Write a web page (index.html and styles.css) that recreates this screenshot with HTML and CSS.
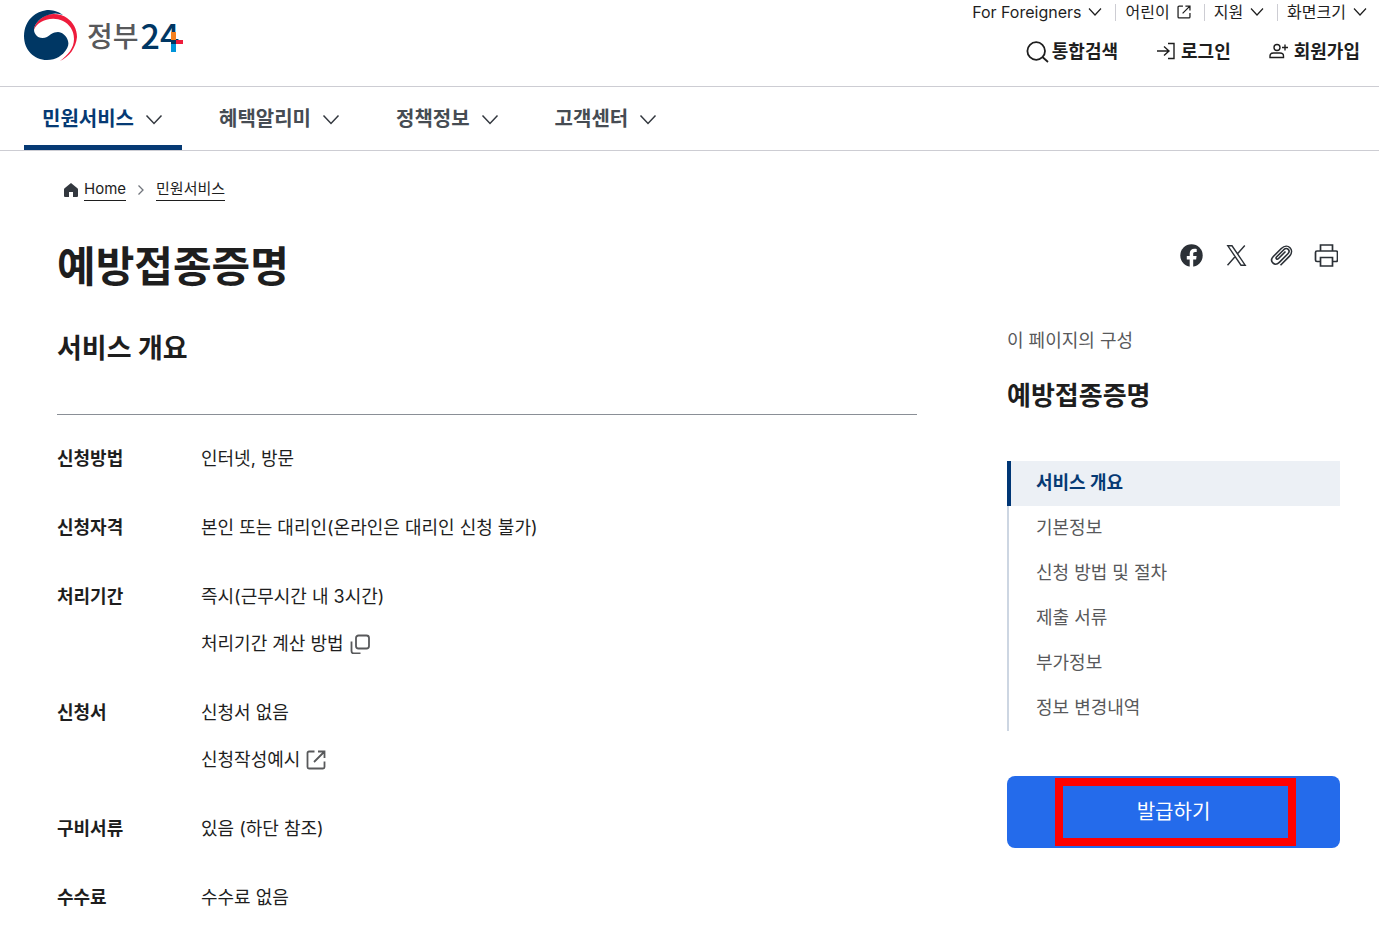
FILE: index.html
```html
<!DOCTYPE html>
<html lang="ko">
<head>
<meta charset="utf-8">
<meta name="viewport" content="width=device-width, initial-scale=1">
<title>예방접종증명 | 정부24</title>
<link rel="stylesheet" href="styles.css">
</head>
<body>
<svg class="sprite" aria-hidden="true">
  <symbol id="chevron" viewBox="0 0 20 20"><path d="M2.500 5.500 10 13.500l7.500-8" fill="none" stroke="currentColor" stroke-width="1.500"/></symbol>
  <symbol id="chevron-small" viewBox="0 0 14 14"><path d="M1 3.500l6 6.500 6-6.500" fill="none" stroke="currentColor" stroke-width="1.200"/></symbol>
  <symbol id="external" viewBox="0 0 20 20"><path d="M8.500 1.500H3a1.500 1.500 0 0 0-1.500 1.500v14A1.500 1.500 0 0 0 3 18.500h14a1.500 1.500 0 0 0 1.500-1.500v-5.500M12 1.500h6.500V8M18 2l-10 10" fill="none" stroke="currentColor" stroke-width="1.800"/></symbol>
</svg>
<header class="header">
  <div class="header-top">
    <a class="logo" href="#" aria-label="정부24">
      <svg class="logo-mark" viewBox="0 0 53 52" aria-hidden="true">
        <path fill="#ee1c3c" d="M10 20C10 14 16 8 23 5C29 3 38 4 43 8C49 12 53 19 53 27C52 38 45 47 36 51C44 45 50 38 50 29C50 20 45 14 39 11C31 7 22 9 17 12C13 14 11 17 10 20Z"/>
        <path fill="#003764" d="M39 5C34 1 28 0 23 0C17 1 12 3 9 6C3 11 0 18 0 26C0 40 10 50 23 50C32 50 39 45 42 40C44 37 45 34 44 31C43 26 38 22 34 22C29 22 26 25 23 27C19 29 14 28 12 25C10 23 10 20 10 19C11 13 17 7 24 5C29 3 34 3 39 5Z"/>
      </svg>
      <span class="logo-name">정부</span>
      <span class="logo-number">24<svg class="logo-cross" viewBox="0 0 14 20" aria-hidden="true"><path fill="#f58220" d="M2 0h5v9H2z"/><path fill="#0095da" d="M2 12h5v8H2z"/><path fill="#ee1c3c" d="M7 8h7v4H7z"/><path fill="#003764" d="M2 8h5v4H2z"/></svg></span>
    </a>
    <div class="header-tools">
      <div class="utility">
        <button type="button">For Foreigners<svg><use href="#chevron-small"/></svg></button>
        <a href="#">어린이<svg><use href="#external"/></svg></a>
        <button type="button">지원<svg><use href="#chevron-small"/></svg></button>
        <button type="button">화면크기<svg><use href="#chevron-small"/></svg></button>
      </div>
      <div class="account">
        <button type="button" class="search"><svg viewBox="0 0 24 24"><path d="M20 11a8.800 8.800 0 1 1-17.600 0 8.800 8.800 0 0 1 17.600 0zM18 17.500l5 4.500" fill="none" stroke="currentColor" stroke-width="1.800"/></svg>통합검색</button>
        <a href="#"><svg viewBox="0 0 20 20"><path d="M1 9h12M8 4.500l5 4.500-5 4.500M12 1.500h6v15h-6" fill="none" stroke="currentColor" stroke-width="1.400"/></svg>로그인</a>
        <a href="#"><svg viewBox="0 0 20 20"><path d="M11 5.500a3 3 0 1 1-6 0 3 3 0 0 1 6 0zM1 15.500V14c0-2 1.500-3 3.500-3H11c2 0 3.500 1 3.500 3v1.500zM16 2.500v6M13 5.500h6" fill="none" stroke="currentColor" stroke-width="1.400"/></svg>회원가입</a>
      </div>
    </div>
  </div>
  <nav class="gnb" aria-label="주 메뉴">
    <button type="button" class="active">민원서비스<svg><use href="#chevron"/></svg></button>
    <button type="button">혜택알리미<svg><use href="#chevron"/></svg></button>
    <button type="button">정책정보<svg><use href="#chevron"/></svg></button>
    <button type="button">고객센터<svg><use href="#chevron"/></svg></button>
  </nav>
</header>
<main class="main">
  <nav class="breadcrumb" aria-label="현재 위치">
    <svg class="home" viewBox="0 0 14 14" aria-hidden="true"><path fill="#33383f" d="M7 0 .6 5.200Q0 5.700 0 6.500V13q0 1 1 1h4V9h4v5h4q1 0 1-1V6.500q0-.8-.6-1.300z"/></svg>
    <a href="#">Home</a>
    <svg class="arrow" viewBox="0 0 8 12" aria-hidden="true"><path d="M1.500 1.500 6 6l-4.500 4.500" fill="none" stroke="#71757c" stroke-width="1.300"/></svg>
    <a href="#">민원서비스</a>
  </nav>
  <div class="title-row">
    <h1>예방접종증명</h1>
    <div class="share">
      <button type="button" aria-label="페이스북"><svg viewBox="0 0 24 24"><circle cx="12.500" cy="11.500" r="11.200" fill="#2b3036"/><path fill="#fff" d="M10.700 23v-7.500H7.800V12h2.900V9.500c0-3.200 1.900-4.800 4.700-4.800.9 0 1.700.1 2.300.2v3h-1.600c-1.400 0-1.900.8-1.900 1.800V12h3.400l-.5 3.500h-2.900V23z"/></svg></button>
      <button type="button" aria-label="X"><svg viewBox="0 0 24 24"><path d="M3.800 1.800h4.200l13.200 19.400H17zM20.800 1.500l-7.500 8.500M11 12.800l-7.500 8.500" fill="none" stroke="#2b3036" stroke-width="1.400"/></svg></button>
      <button type="button" aria-label="링크 복사"><svg viewBox="0 0 24 24"><path d="M16.500 7.500 9.300 14.700c-1.300 1.300-3-.4-1.800-1.700l7.300-7.300c3.200-3 7.200.9 4.100 4.100l-8.600 8.600c-4.700 4.500-10.500-1.200-6-5.900l8-8c6.500-6 14 1.300 8 7.900l-8.800 8.800" fill="none" stroke="#2b3036" stroke-width="1.600"/></svg></button>
      <button type="button" aria-label="인쇄"><svg viewBox="0 0 24 24"><path d="M6.500 7V1h12v6M6.500 17.500H3A1.500 1.500 0 0 1 1.500 16V8.500A1.500 1.500 0 0 1 3 7h19a1.500 1.500 0 0 1 1.500 1.500V16a1.500 1.500 0 0 1-1.500 1.500h-3.500M6.500 13.500h12V22h-12z" fill="none" stroke="#2b3036" stroke-width="1.700"/></svg></button>
    </div>
  </div>
  <div class="columns">
    <section class="overview">
      <h2>서비스 개요</h2>
      <dl>
        <div><dt>신청방법</dt><dd>인터넷, 방문</dd></div>
        <div><dt>신청자격</dt><dd>본인 또는 대리인(온라인은 대리인 신청 불가)</dd></div>
        <div><dt>처리기간</dt><dd>즉시(근무시간 내 3시간)</dd>
          <dd><a href="#">처리기간 계산 방법<svg viewBox="0 0 20 20"><rect x="6" y="1.500" width="13" height="13" rx="2.500"/><path d="M1.500 7.500V17A2.500 2.500 0 0 0 4 19.500h6.500"/></svg></a></dd></div>
        <div><dt>신청서</dt><dd>신청서 없음</dd>
          <dd><a href="#">신청작성예시<svg><use href="#external"/></svg></a></dd></div>
        <div><dt>구비서류</dt><dd>있음 (하단 참조)</dd></div>
        <div><dt>수수료</dt><dd>수수료 없음</dd></div>
      </dl>
    </section>
    <aside class="side">
      <p>이 페이지의 구성</p>
      <h2>예방접종증명</h2>
      <ul>
        <li><a class="current" href="#">서비스 개요</a></li>
        <li><a href="#">기본정보</a></li>
        <li><a href="#">신청 방법 및 절차</a></li>
        <li><a href="#">제출 서류</a></li>
        <li><a href="#">부가정보</a></li>
        <li><a href="#">정보 변경내역</a></li>
      </ul>
      <button type="button" class="issue">발급하기</button>
    </aside>
  </div>
</main>
</body>
</html>
```
FILE: styles.css
```css
* { box-sizing: border-box; margin: 0; padding: 0; }
body { font: 18px/27px Inter, "Noto Sans CJK KR", sans-serif; color: #1e1e1e; background: #fff; }
button { font: inherit; color: inherit; background: none; border: 0; cursor: pointer; }
a { color: inherit; text-decoration: none; }
ul { list-style: none; }
svg { display: block; flex: none; }
.sprite { position: absolute; width: 0; height: 0; }

.header-top { display: flex; justify-content: space-between; height: 87px; padding-left: 24px; border-bottom: 1px solid #cdcdd3; }
.logo { display: flex; align-items: center; height: 72px; }
.logo-mark { width: 53px; height: 52px; }
.logo-name { margin-left: 10px; padding-bottom: 2px; font: 500 28px/40px "Noto Sans CJK KR", sans-serif; color: #58595b; }
.logo-number { position: relative; margin-left: 2px; padding-bottom: 2px; font: 500 34px/40px "Noto Sans CJK KR", sans-serif; color: #003764; }
.logo-cross { position: absolute; right: -4px; top: 17px; width: 14px; height: 20px; }

.header-tools { display: flex; flex-direction: column; align-items: flex-end; }
.utility { display: flex; align-items: center; height: 24px; padding-right: 12px; font-size: 16px; line-height: 24px; }
.utility > * { display: flex; align-items: center; gap: 7px; padding-right: 13px; }
.utility > * + * { padding-left: 10px; background: linear-gradient(#cdcdd3, #cdcdd3) no-repeat left center / 1px 17px; }
.utility > :last-child { padding-right: 0; }
.utility svg { width: 14px; height: 14px; }
.account { display: flex; gap: 38px; margin-top: 14px; padding-right: 19px; font-weight: 700; }
.account > * { display: flex; align-items: center; gap: 5px; }
.account svg { width: 20px; height: 20px; }
.account .search { gap: 3px; }
.account .search svg { width: 24px; height: 24px; }

.gnb { display: flex; gap: 19px; height: 64px; padding: 0 24px; border-bottom: 1px solid #cdcdd3; font-size: 20px; font-weight: 700; color: #464c53; }
.gnb button { display: flex; align-items: center; gap: 10px; padding: 2px 18px 0; border-top: 5px solid transparent; border-bottom: 5px solid transparent; }
.gnb .active { color: #063a74; border-bottom-color: #063a74; }
.gnb svg { width: 20px; height: 20px; color: #33383f; }

.main { padding: 27px 39px 16px 57px; }
.breadcrumb { display: flex; align-items: center; padding-left: 7px; font-size: 15px; line-height: 22px; }
.breadcrumb a { border-bottom: 1px solid #1e1e1e; }
.home { width: 14px; height: 14px; margin-right: 6px; }
.arrow { width: 8px; height: 12px; margin: 0 11px; }
.title-row { display: flex; justify-content: space-between; margin-top: 36px; }
.title-row h1 { font-size: 42px; line-height: 60px; }
.share { display: flex; gap: 17px; padding-top: 5px; }
.share button { display: flex; align-items: center; justify-content: center; width: 28px; height: 28px; }
.share svg { width: 24px; height: 24px; }

.columns { display: grid; grid-template-columns: minmax(0, 1fr) 333px; gap: 90px; margin-top: 30px; align-items: start; }
.overview h2 { padding: 2px 0 45px; border-bottom: 1px solid #8a8f96; font-size: 27px; line-height: 40px; }
.overview dl { display: grid; gap: 42px; padding-top: 30px; }
.overview dl > div { display: grid; grid-template-columns: 144px 1fr; row-gap: 20px; }
.overview dt { font-weight: 700; }
.overview dd { grid-column: 2; }
.overview dd a { display: inline-flex; align-items: center; gap: 6px; vertical-align: top; }
.overview dd svg { width: 20px; height: 20px; color: #58595b; fill: none; stroke: #58595b; stroke-width: 1.8px; }

.side p { color: #58595b; }
.side h2 { margin-top: 22px; font-size: 26px; line-height: 40px; }
.side ul { margin-top: 45px; }
.side li a { display: block; padding: 8px 27px 10px; border-left: 2px solid #cdd6e2; color: #58595b; }
.side li .current { padding-left: 25px; border-left: 4px solid #003675; background: #ecf0f5; color: #063a74; font-weight: 700; }
.issue { position: relative; width: 100%; height: 72px; margin-top: 45px; border-radius: 8px; background: #246beb; color: #fff; font-size: 20px; }
.issue::after { content: ""; position: absolute; inset: 2px 44px 2px 48px; border: 8px solid #f00; }
```
